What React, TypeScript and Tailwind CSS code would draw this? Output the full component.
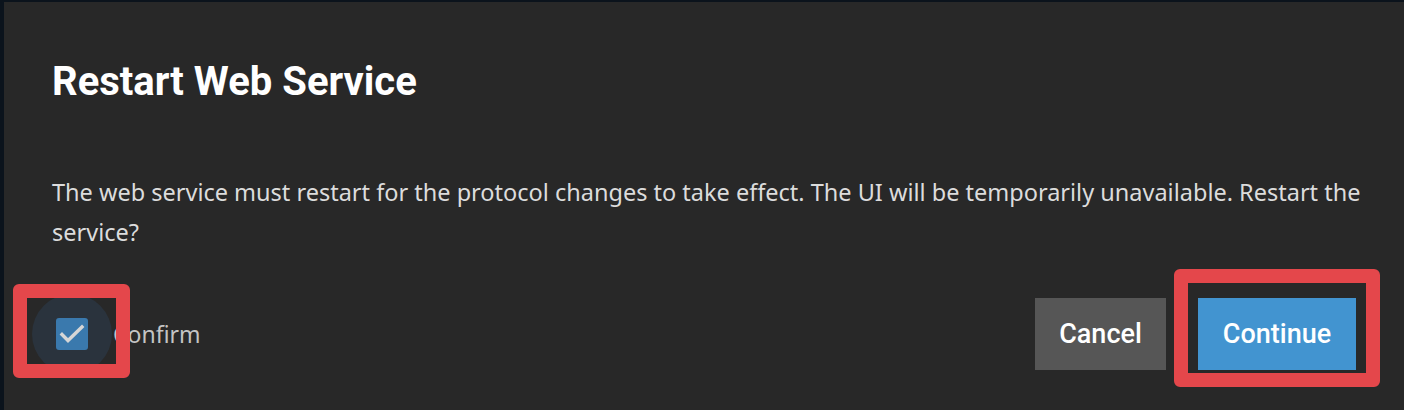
import React from "react";

export default function App() {
  return (
    <div className="w-[1404px] h-[410px] bg-[#0b131c] pl-[4px] pt-[2px] overflow-hidden">
      <div className="relative w-full h-full bg-[#282828] pl-[48px] pr-[40px] pt-[56px]">
        <h1
          className="text-[40px] leading-[48px] font-bold text-white"
          style={{ fontFamily: "Roboto, 'Liberation Sans', sans-serif" }}
        >
          Restart Web Service
        </h1>
        <p
          className="mt-[66px] text-[23.5px] leading-[40px] text-[#dcdcdc]"
          style={{ fontFamily: "'Noto Sans', 'Open Sans', sans-serif" }}
        >
          The web service must restart for the protocol changes to take effect. The UI will be temporarily unavailable. Restart the service?
        </p>
        <div className="mt-[42px] pr-[8px] flex items-center justify-between">
          <div className="flex items-center -ml-[20px]">
            <div className="shrink-0 w-[80px] h-[80px] rounded-full bg-[#2a333d] flex items-center justify-center">
              <div className="shrink-0 w-[32px] h-[32px] rounded-[3px] bg-[#3a79ad]">
                <svg className="block w-[32px] h-[32px]" width="32" height="32" viewBox="0 0 32 32" fill="none">
                  <path d="M6 16.5l6 6L26 9" stroke="#d6d6d6" strokeWidth="3.4" strokeLinecap="square" strokeLinejoin="miter" />
                </svg>
              </div>
            </div>
            <span
              className="ml-[1px] text-[23px] text-[#c4c4c4]"
              style={{ fontFamily: "'Noto Sans', 'Open Sans', sans-serif" }}
            >
              Confirm
            </span>
          </div>
          <div className="flex items-center gap-[32px]">
            <button
              className="w-[131px] h-[72px] bg-[#565656] text-white text-[27px] font-medium"
              style={{ fontFamily: "Roboto, 'Liberation Sans', sans-serif" }}
            >
              Cancel
            </button>
            <button
              className="w-[158px] h-[72px] bg-[#4294d0] text-white text-[27px] font-medium"
              style={{ fontFamily: "Roboto, 'Liberation Sans', sans-serif" }}
            >
              Continue
            </button>
          </div>
        </div>
        <div className="absolute left-[9px] top-[282px] w-[117px] h-[94px] border-[14px] border-[#e4474b] rounded-[6px]" />
        <div className="absolute left-[1170px] top-[267px] w-[206px] h-[118px] border-[14px] border-[#e4474b] rounded-[6px]" />
      </div>
    </div>
  );
}
